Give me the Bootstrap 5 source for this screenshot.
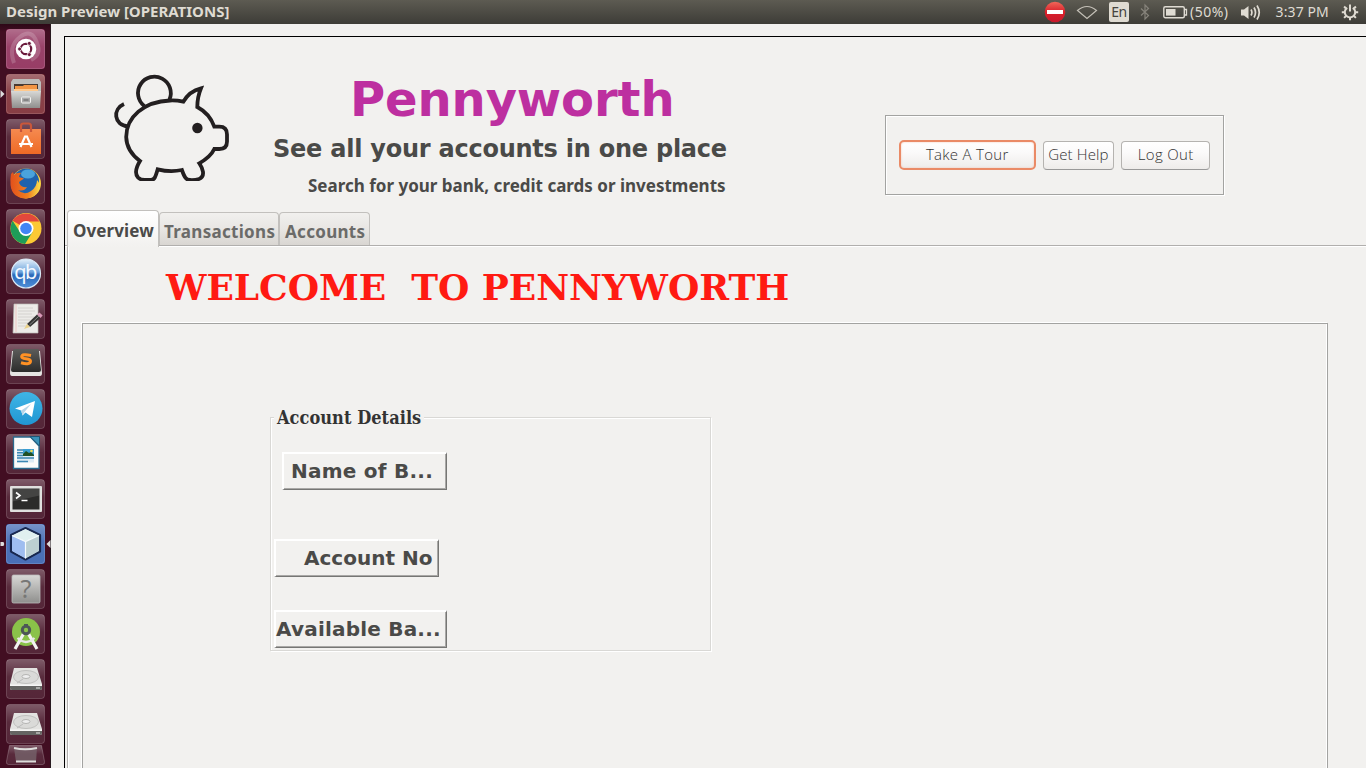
<!DOCTYPE html>
<html lang="en">
<head>
<meta charset="utf-8">
<meta name="viewport" content="width=device-width, initial-scale=1">
<title>Design Preview [OPERATIONS]</title>
<link href="https://cdn.jsdelivr.net/npm/bootstrap@5.3.0/dist/css/bootstrap.min.css" rel="stylesheet">
<style>
body{background:#f2f1ef;color:#4a4a48;font-family:"Noto Sans",sans-serif}
.ln{display:block;width:max-content;white-space:pre}
.topbar{height:24px;background:linear-gradient(#5d5b52,#3d3c37);color:#dfdbd2}
.topbar-title{font:bold 15px/22px "Noto Sans",sans-serif;padding-left:6px}
.indicators{width:322px;height:24px;font:14px/24px "Noto Sans",sans-serif}
.indicators svg{display:block;height:24px;flex:none}
.lang{width:20px;height:20px;margin:2px 0 0 12px;border-radius:2px;background:#dfdbd2;color:#45433e;font:14px/20px "Noto Sans",sans-serif;letter-spacing:-.5px}
.launcher{width:51px;border-right:1px solid #281a1f;padding:5px 0 0 5.5px;gap:5px;background:linear-gradient(#2d0817,#420e22 8px)}
.launcher svg{display:block;width:39px;height:40px;flex:none;overflow:visible}
.launcher .folded{height:22px;margin-top:-4px}
.frame-box{margin:12px 0 0 13px;border:solid #000;border-width:1px 0 0 1px}
.masthead{height:173px}
.pig{width:120px;height:109px;margin:35px 0 0 47px}
.brand{margin-left:41px;width:459px;padding-top:38px}
.brand-name{font:bold 48px/48px "DejaVu Sans",sans-serif;color:#bd2fa0;margin-left:77px;letter-spacing:-.1px}
.brand-tag{font:bold 24px/24px "DejaVu Sans",sans-serif;margin-top:14px;letter-spacing:-.24px}
.brand-hint{font:bold 17px/17px "Noto Sans",sans-serif;margin:16px 0 0 35px}
.tools{width:339px;height:80px;margin:78px 0 0 153px;border:1px solid #a3a3a1;box-shadow:1px 1px #fff,inset 1px 1px #fff;padding:24px 13px 0;gap:7px}
.tool-btn{height:29px;margin-top:1px;border:1px solid #b5b3b0;border-bottom-color:#999;border-radius:4px;background:linear-gradient(#fff,#fbfafa 40%,#eeecea);color:#333;font:300 15px/25px "Open Sans",sans-serif;padding:0}
.tool-btn .ln{margin:-2px auto 0;letter-spacing:.3px}
.tool-btn.active-ring{height:30px;margin-top:0;border:2px solid #ea8a66;border-radius:5px;box-shadow:inset 0 0 2px #f3c2ae}
.tool-btn.active-ring .ln{margin-top:-1px}
.tabs{height:36px;padding-left:2px;border-bottom:1px solid #b1afad;box-shadow:0 1px #fff}
.tab-item{height:33px;border:1px solid #c2c0bd;border-bottom:0;border-radius:4px 4px 0 0;background:linear-gradient(#f1f0ee,#e8e6e3 50%,#d9d6d2);font:bold 17px/38px "Noto Sans",sans-serif;color:#6b6b69;padding-left:5px;letter-spacing:.3px}
.tab-item.current{height:37px;margin-bottom:-2px;line-height:40px;background:linear-gradient(#fff,#f2f1ef);color:#4a4a48;position:relative;letter-spacing:.1px}
.tab-page{margin-left:2px;border-left:1px solid #b1afad;box-shadow:inset 1px 0 #fff;height:522px;overflow:hidden}
.welcome{font:bold 36px/36px "DejaVu Serif",serif;color:#ff1a12;margin:23px 0 0 98px;letter-spacing:-.04px}
.sheet{margin:18px 38px 0 14px;height:460px;border:1px solid #a3a3a1;box-shadow:-1px -1px #fff,inset -1px 0 #fff;padding:83px 0 0 187px}
.details{width:441px;height:244px;position:relative;padding-top:10px}
.details-border{position:absolute;inset:10px 0 0 0;border:1px solid #d9d8d5;box-shadow:1px 1px #fff,inset 1px 1px #fff;height:234px}
.details-title{position:absolute;left:4px;top:1px;background:#f2f1ef;padding:0 3px;font:bold 18px/20px "DejaVu Serif Condensed","DejaVu Serif",serif;letter-spacing:.05px;color:#333}
.field{position:relative;height:38px;width:165px;border:2px solid #fff;border-width:2px 1px 1px 2px;border-right-color:#767674;border-bottom-color:#767674;box-shadow:inset -1px -1px #a9a8a6;font:bold 20px/34px "DejaVu Sans",sans-serif}
</style>
<script src="https://cdn.jsdelivr.net/npm/bootstrap@5.3.0/dist/js/bootstrap.bundle.min.js"></script>
</head>
<body class="vh-100 overflow-hidden d-flex flex-column">
<svg width="0" height="0" class="position-absolute">
  <defs>
    <linearGradient id="gloss" x1="0" y1="0" x2="0" y2="1"><stop offset="0" stop-color="#fff" stop-opacity=".32"/><stop offset=".45" stop-color="#fff" stop-opacity=".12"/><stop offset="1" stop-color="#fff" stop-opacity=".1"/></linearGradient>
    <linearGradient id="steel" x1="0" y1="0" x2="0" y2="1"><stop offset="0" stop-color="#d8d8d6"/><stop offset="1" stop-color="#8f8f8d"/></linearGradient>
    <linearGradient id="bag" x1="0" y1="0" x2="0" y2="1"><stop offset="0" stop-color="#f58a50"/><stop offset="1" stop-color="#ee6a25"/></linearGradient>
    <linearGradient id="fox" x1="0" y1="0" x2="1" y2="0"><stop offset="0" stop-color="#e2501c"/><stop offset=".6" stop-color="#f0801f"/><stop offset="1" stop-color="#fbdc4a"/></linearGradient>
    <linearGradient id="qbt" x1="0" y1="0" x2="0" y2="1"><stop offset="0" stop-color="#e4f0fa"/><stop offset=".45" stop-color="#6ea4dc"/><stop offset=".55" stop-color="#2a68b8"/><stop offset="1" stop-color="#4f8fd8"/></linearGradient>
    <linearGradient id="sky" x1="0" y1="0" x2="0" y2="1"><stop offset="0" stop-color="#3fb5e6"/><stop offset="1" stop-color="#2196d2"/></linearGradient>
    <linearGradient id="dark" x1="0" y1="0" x2="0" y2="1"><stop offset="0" stop-color="#5c5c5a"/><stop offset="1" stop-color="#2c2c2b"/></linearGradient>
    <linearGradient id="stop" x1="0" y1="0" x2="0" y2="1"><stop offset="0" stop-color="#f0685a"/><stop offset=".5" stop-color="#d9202a"/><stop offset="1" stop-color="#c8182c"/></linearGradient>
    <g id="tile"><rect x=".5" y=".5" width="38" height="39" rx="3" fill="url(#gloss)" stroke="#fff" stroke-opacity=".18"/></g>
    <g id="disk"><use href="#tile"/>
      <path d="M8 9h23l5 16v4q0 2-2 2H6q-2 0-2-2v-4z" fill="#e3e3e1"/>
      <path d="M4 26h32v3q0 2-2 2H6q-2 0-2-2z" fill="#656563"/><path d="M4 25.500h32v1.500H4z" fill="#f6f6f5"/><path d="M30 29h4" stroke="#a8a8a6" stroke-width="2"/>
      <ellipse cx="20" cy="18" rx="12.500" ry="6.500" fill="#dadad8" stroke="#c0c0be"/><ellipse cx="20" cy="17.500" rx="4" ry="2" fill="#eee" stroke="#b5b5b3"/><path d="M11 24l6-4" stroke="#bbb"/></g>
  </defs>
</svg>
<header class="topbar d-flex justify-content-between flex-shrink-0">
  <div class="topbar-title"><span class="ln">Design Preview [OPERATIONS]</span></div>
  <div class="indicators d-flex">
    <svg width="22" viewBox="0 0 22 24"><circle cx="11" cy="12" r="10.300" fill="url(#stop)"/><rect x="3" y="10" width="16" height="4" fill="#fff"/></svg>
    <svg width="22" style="margin-left:10px" viewBox="0 0 22 24"><path d="M1.500 10.500Q11 2.500 20.500 10.500L11 18.500z" fill="none" stroke="#c4c0b7" stroke-width="1.200"/></svg>
    <div class="lang text-center" style="margin-left:11px">En</div>
    <svg width="12" style="margin-left:10px" viewBox="0 0 12 24"><path d="M2 8.500l7.500 7L6 19V5l3.500 3.500L2 15.500" fill="none" stroke="#86837b" stroke-width="1.200"/></svg>
    <svg width="26" style="margin-left:12px" viewBox="0 0 26 24"><rect x=".8" y="6.800" width="20.500" height="11" rx="1.500" fill="none" stroke="#dfdbd2" stroke-width="1.400"/><rect x="3" y="9" width="9.500" height="6.600" fill="#dfdbd2"/><path d="M21.500 9.500h2v5.500h-2" fill="none" stroke="#dfdbd2" stroke-width="1.300"/></svg>
    <span class="ln" style="margin-left:1px;letter-spacing:.5px">(50%)</span>
    <svg width="22" style="margin-left:11px" viewBox="0 0 22 24"><path d="M1 9.500h3L8.500 6v13L4 15.500H1z" fill="#dfdbd2"/><path d="M11 9.500q1.800 3 0 6M14 7.500q3 5 0 10M17 5.500q4.500 7 0 14" fill="none" stroke="#dfdbd2" stroke-width="1.700"/></svg>
    <span class="ln" style="margin-left:14px;letter-spacing:.1px">3:37 PM</span>
    <svg width="18" style="margin-left:12px" viewBox="0 0 18 24"><path d="M6.200 7.800a5.200 5.200 0 1 0 5.600 0M9 4.500v7" fill="none" stroke="#dfdbd2" stroke-width="2"/><path d="M9 17.500v2.800M3.500 12.200H.8M17.200 12.200h-2.700M5 16l-1.900 1.900M13 16l1.900 1.900M4.800 8.200L3.100 6.500M13.200 8.200l1.700-1.700" stroke="#dfdbd2" stroke-width="2"/></svg>
  </div>
</header>
<div class="d-flex flex-grow-1 overflow-hidden">
  <nav class="launcher d-flex flex-column flex-shrink-0">
    <svg viewBox="0 0 39 40"><rect width="39" height="40" rx="3" fill="#8c2855"/><use href="#tile"/><path d="M8 34Q2 17 14 8T31 14Q36 25 25 31" fill="none" stroke="#fff" stroke-opacity=".18" stroke-width="4"/><circle cx="20" cy="20" r="10.300" fill="#fff"/><circle cx="20" cy="20" r="5.200" fill="none" stroke="#6a1a3c" stroke-width="2.200"/><path d="M20 20L12 20M20 20L24 13.100M20 20L24 26.900" stroke="#fff" stroke-width="1"/><circle cx="20" cy="20" r="3.900" fill="#fff"/><g fill="#6a1a3c" stroke="#fff" stroke-width=".8"><circle cx="13.600" cy="20" r="2"/><circle cx="23.300" cy="14.400" r="2"/><circle cx="23.300" cy="25.600" r="2"/></g></svg>
    <svg viewBox="0 0 39 40"><path d="M-5.500 16l4 4-4 4z" fill="#ddd"/><rect width="39" height="40" rx="3" fill="#7b2830"/><use href="#tile"/><path d="M7 5h26l2 3v10H5V8z" fill="#bdbdbb"/><path d="M8 10h24v8H8z" fill="#4a3a32"/><path d="M9 12h8l1-1h13v7H9z" fill="#f29544"/><path d="M8 15h24v3H8z" fill="#ffc98d"/><path d="M5 17h30l-1 17H6z" fill="url(#steel)"/><rect x="15.500" y="23" width="9" height="6" rx="1" fill="#aaa" stroke="#f2f2f0"/><path d="M17.500 26h5" stroke="#777" stroke-width="1.500"/></svg>
    <svg viewBox="0 0 39 40"><use href="#tile"/><path d="M5 10h30v25H5z" fill="url(#bag)"/><path d="M15 13V7q0-2.500 2.500-2.500h5Q25 4.500 25 7v6" fill="none" stroke="#c9573a" stroke-width="2.200"/><path d="M14.500 28L19 17.500h2L25.500 28M13 25h14" fill="none" stroke="#fff" stroke-width="2.200"/></svg>
    <svg viewBox="0 0 39 40"><use href="#tile"/><circle cx="20" cy="19.500" r="15" fill="#fbd443"/><circle cx="20" cy="17.500" r="13" fill="#1f62ad"/><ellipse cx="22" cy="10" rx="7" ry="4.500" fill="#4aa3dc"/><path d="M5 10l2-2 1 3q3-3 7-2-2 2-2 4l5 1.500-5 3.500q1 6 8 5-3 5-9 3 6 6 13 1 6-4 6-11 4 4 2 10-4 8-13 8.500Q6 34 4.500 21q-.5-6 .5-11z" fill="url(#fox)"/></svg>
    <svg viewBox="0 0 39 40"><use href="#tile"/><circle cx="20" cy="19.500" r="15.500" fill="#fcc934"/><path d="M20 19.500L6.600 11.800A15.500 15.500 0 0 1 33.400 12.500H20z" fill="#e2483c"/><path d="M6.600 11.800A15.500 15.500 0 0 0 19 35l7.500-12L20 19.500l-6 3.500z" fill="#1e9d58"/><circle cx="20" cy="19.500" r="7.500" fill="#fff"/><circle cx="20" cy="19.500" r="5.800" fill="#4285f4"/></svg>
    <svg viewBox="0 0 39 40"><use href="#tile"/><circle cx="20" cy="19.500" r="14.500" fill="url(#qbt)" stroke="#dbe9f6" stroke-width="1.200"/><text x="19.700" y="25" text-anchor="middle" font-family="Noto Sans,sans-serif" font-size="20" fill="#f4f9ff" textLength="23">qb</text></svg>
    <svg viewBox="0 0 39 40"><use href="#tile"/><path d="M8 5h24v29H7z" fill="#ecebe8" stroke="#bdbbb8" stroke-width=".7"/><path d="M12 9h15M12 12h17M12 15h14M12 18h16M12 21h12M12 24h10M12 27h9" stroke="#d4d2cf"/><path d="M10 5v28" stroke="#f1b9b4" stroke-width=".7"/><path d="M21 25L31 15.500l3.500 3.500L24 28z" fill="#353534"/><path d="M31 15.500l2.500-2 3.200 3-2.200 2.500z" fill="#d99ab8"/><path d="M18 30l3-5 3 3z" fill="#ead28a"/><path d="M23.500 26L33 17" stroke="#888"/></svg>
    <svg viewBox="0 0 39 40"><use href="#tile"/><path d="M6 7L4 29q0 3 2 3h28q2 0 2-3L34 7z" fill="#e6e5e3"/><path d="M8 5h24q1 0 1 2l2 19q0 2-2 2H7q-2 0-2-2L7 7q0-2 1-2z" fill="url(#dark)"/><path d="M25 11.500q-9-2-9.300 1.200c0 3 8.800 1 8.800 4.300 0 3.500-5 3-9.500 1.800" fill="none" stroke="#ff9124" stroke-width="3"/></svg>
    <svg viewBox="0 0 39 40"><use href="#tile"/><circle cx="20" cy="19.500" r="16.500" fill="url(#sky)"/><path d="M9 19.500L29 12l-3 16-6.500-4.500-3 3-1.300-5z" fill="#fff"/><path d="M15.200 21.500l9.800-6.500-6.500 8-2 3.500z" fill="#b7d5e8"/></svg>
    <svg viewBox="0 0 39 40"><use href="#tile"/><path d="M7.500 3h17L33 12v22.500H7.500z" fill="#fbfbfa" stroke="#2a6a8e" stroke-width="1.300"/><path d="M24 2.500h9.500V12z" fill="#3991b8" stroke="#1d5576"/><path d="M11 15.500h17v13H11z" fill="#dcebf4"/><path d="M11 16h6M11 18.700h6M11 21.400h6M11 24h17M11 27.500h11" stroke="#3b87b4" stroke-width="1.500"/><path d="M17 15h11v7H17z" fill="#3a9fd4"/><path d="M17 22v-2l3-3 3 2 2-1 3 3v1z" fill="#205026"/><circle cx="25.500" cy="17" r="1.300" fill="#f3dc4c"/></svg>
    <svg viewBox="0 0 39 40"><use href="#tile"/><rect x="4" y="7" width="32" height="26" rx="1" fill="#e0e0de"/><rect x="6.500" y="9.500" width="27" height="21" fill="#2b2b2a"/><path d="M6.500 9.500h27v7l-27 6z" fill="#fff" opacity=".12"/><path d="M10 13.500l4 3-4 3M15.500 21.500h6" fill="none" stroke="#fff" stroke-width="1.600"/></svg>
    <svg viewBox="0 0 39 40"><path d="M-5.500 18h3q1.500 2 0 4h-3zM44.500 16v8l-4-4z" fill="#ddd"/><rect width="39" height="40" rx="3" fill="#355fae"/><use href="#tile"/><path d="M19.500 4L34 11v16.500L19.500 35.500 5 27.500V11z" fill="#b3cbe6" stroke="#182850" stroke-width="2.200" stroke-linejoin="round"/><path d="M19.500 5L33 11.500l-13.500 6L6 11.500z" fill="#e0f0f0"/><path d="M6 11.500l13.500 6v17L6 27z" fill="#9fbdf0"/><path d="M33 11.500l-13.500 6v17L33 27z" fill="#bccfd2"/><path d="M6 11.500l13.500 6 13.500-6M19.500 17.500v17" fill="none" stroke="#f5fafc" stroke-width="1.200"/></svg>
    <svg viewBox="0 0 39 40"><use href="#tile"/><rect x="6" y="6" width="28" height="28" rx="1.500" fill="url(#steel)" stroke="#bbb" stroke-width=".8"/><text x="20" y="29" text-anchor="middle" font-family="Noto Sans,sans-serif" font-size="25" fill="#777775">?</text></svg>
    <svg viewBox="0 0 39 40"><use href="#tile"/><circle cx="20" cy="18" r="14" fill="#8ac249"/><path d="M18.500 18L9 35M21.500 18L31 35" stroke="#f3f3f1" stroke-width="3.200"/><path d="M11.500 24q8.500 8 17 0" fill="none" stroke="#e8e8e6" stroke-width="2.200"/><path d="M20 10v4" stroke="#4d5657" stroke-width="4"/><circle cx="20" cy="16" r="3.700" fill="#8ac249" stroke="#4d5657" stroke-width="3"/></svg>
    <svg viewBox="0 0 39 40"><use href="#disk"/></svg>
    <svg viewBox="0 0 39 40"><use href="#disk"/></svg>
    <svg class="folded" viewBox="0 0 39 22"><path d="M3.500.500h32l3 16q.5 3-2 3H2.500q-2.500 0-2-3z" fill="url(#gloss)" stroke="#fff" stroke-opacity=".22"/><path d="M8 3h23l-1 14H10z" fill="#75636a" opacity=".8"/><path d="M8 3q11 2.500 23 0M10 16.500h20" fill="none" stroke="#dedddb" stroke-width="2"/></svg>
  </nav>
  <main class="frame-box flex-grow-1">
    <section class="masthead d-flex">
      <svg class="pig" viewBox="112 72 120 109" fill="none" stroke="#231f20" stroke-width="3.800"><path d="M144.300 106A16.400 16.400 0 1 1 169.500 99.500M124 104C112.500 109 113.500 125 128 126.300"/><path d="M183.300 101.700Q176.500 100.200 170 100.500C144 101.500 126.200 117 126.200 137q.3 14 13.800 24c-4 6.500-5.500 12.500-2 16.500q2.500 2.500 7 2.500h6c3.500 0 4.500-3 6.700-10.700q12.500 3.200 24.200.7c2.500 7 4 10 8.100 10q5 .3 9-1c7-3 3.500-11 .3-15.700 7-4 12.500-9 15-14.300h5c6 0 7.700-3 7.700-7.500v-7c0-5-2.500-7.800-7.700-7.800h-5c-3.200-9-8.500-15.200-17-19.700 0-7 .5-11 3.700-18.700q-11.500 2.700-17.700 13.400z"/><circle cx="197.400" cy="128" r="5.200" fill="#231f20" stroke="none"/></svg>
      <div class="brand">
        <div class="brand-name ln">Pennyworth</div>
        <div class="brand-tag ln">See all your accounts in one place</div>
        <div class="brand-hint ln">Search for your bank, credit cards or investments</div>
      </div>
      <div class="tools d-flex">
        <button class="tool-btn active-ring" style="width:137px"><span class="ln">Take A Tour</span></button>
        <button class="tool-btn" style="width:72px"><span class="ln" style="letter-spacing:.15px">Get Help</span></button>
        <button class="tool-btn" style="width:89px"><span class="ln">Log Out</span></button>
      </div>
    </section>
    <div class="tabs d-flex align-items-end">
      <div class="tab-item current" style="width:92px"><span class="ln">Overview</span></div>
      <div class="tab-item" style="width:120px;padding-left:4px"><span class="ln">Transactions</span></div>
      <div class="tab-item" style="width:91px"><span class="ln">Accounts</span></div>
    </div>
    <section class="tab-page">
      <div class="welcome ln">WELCOME  TO PENNYWORTH</div>
      <div class="sheet">
        <div class="details">
          <div class="details-border"></div>
          <div class="details-title"><span class="ln">Account Details</span></div>
          <div class="field" style="margin:35px 0 0 12px;padding-left:7px;letter-spacing:.25px"><span class="ln">Name of B...</span></div>
          <div class="field" style="margin:49px 0 0 4px;padding-left:28px"><span class="ln">Account No</span></div>
          <div class="field" style="width:173px;margin:33px 0 0 4px;letter-spacing:.2px"><span class="ln">Available Ba...</span></div>
        </div>
      </div>
    </section>
  </main>
</div>
</body>
</html>
